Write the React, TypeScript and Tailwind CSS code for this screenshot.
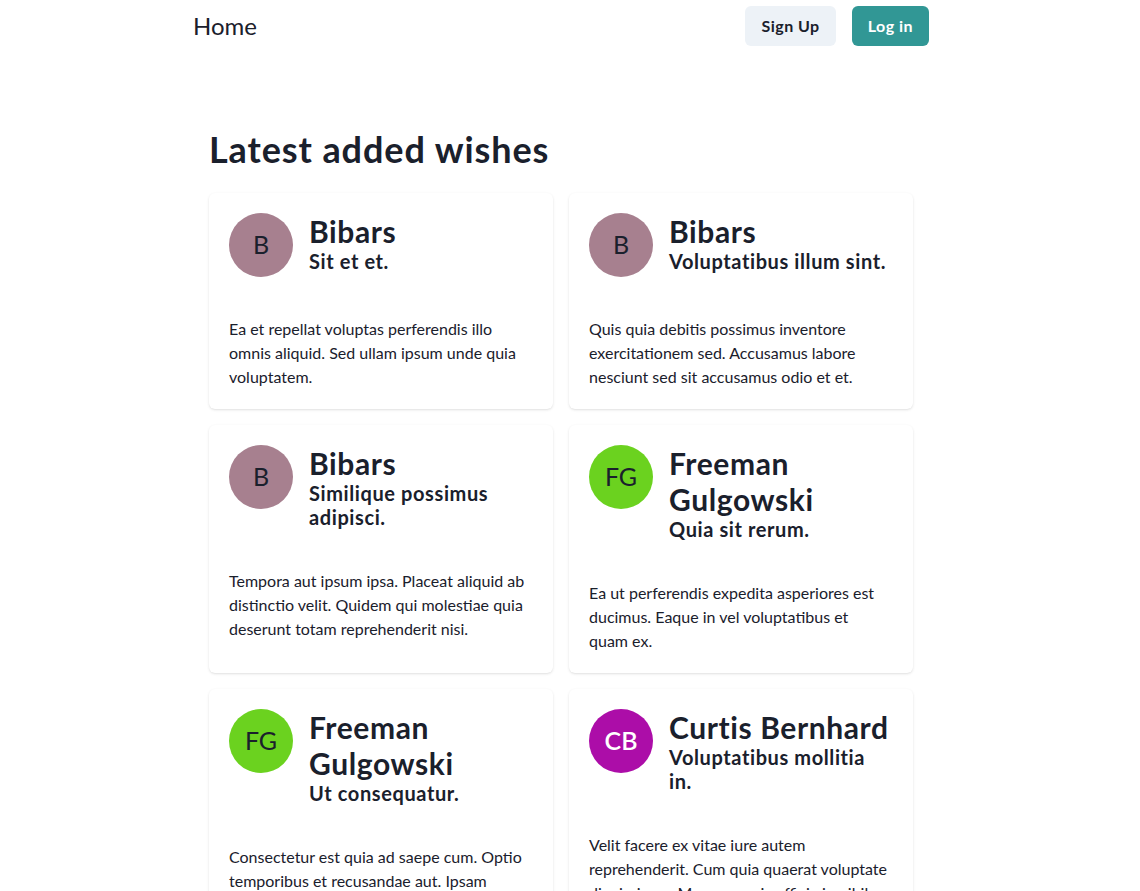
import React from "react";

type Wish = {
  name: string;
  initials: string;
  color: string;
  light: boolean;
  title: string;
  body: string;
};

const wishes: Wish[] = [
  {
    name: "Bibars",
    initials: "B",
    color: "bg-[#a7808f]",
    light: false,
    title: "Sit et et.",
    body: "Ea et repellat voluptas perferendis illo omnis aliquid. Sed ullam ipsum unde quia voluptatem.",
  },
  {
    name: "Bibars",
    initials: "B",
    color: "bg-[#a7808f]",
    light: false,
    title: "Voluptatibus illum sint.",
    body: "Quis quia debitis possimus inventore exercitationem sed. Accusamus labore nesciunt sed sit accusamus odio et et.",
  },
  {
    name: "Bibars",
    initials: "B",
    color: "bg-[#a7808f]",
    light: false,
    title: "Similique possimus adipisci.",
    body: "Tempora aut ipsum ipsa. Placeat aliquid ab distinctio velit. Quidem qui molestiae quia deserunt totam reprehenderit nisi.",
  },
  {
    name: "Freeman Gulgowski",
    initials: "FG",
    color: "bg-[#6bd21f]",
    light: false,
    title: "Quia sit rerum.",
    body: "Ea ut perferendis expedita asperiores est ducimus. Eaque in vel voluptatibus et quam ex.",
  },
  {
    name: "Freeman Gulgowski",
    initials: "FG",
    color: "bg-[#6bd21f]",
    light: false,
    title: "Ut consequatur.",
    body: "Consectetur est quia ad saepe cum. Optio temporibus et recusandae aut. Ipsam laboriosam quis et dolorem.",
  },
  {
    name: "Curtis Bernhard",
    initials: "CB",
    color: "bg-[#ac0da8]",
    light: true,
    title: "Voluptatibus mollitia in.",
    body: "Velit facere ex vitae iure autem reprehenderit. Cum quia quaerat voluptate dignissimos. Magnam quis officia in nihil.",
  },
];

function Card({ w }: { w: Wish }) {
  return (
    <div className="bg-white rounded-md shadow-sm flex flex-col">
      <div className="p-5 flex gap-4 items-start">
        <div
          className={`${w.color} w-16 h-16 rounded-full flex items-center justify-center shrink-0 text-[25px] ${
            w.light ? "text-white font-semibold" : "text-[#1a202c]"
          }`}
        >
          {w.initials}
        </div>
        <div className="flex flex-col min-w-0 flex-1">
          <h3 className="text-[30px] leading-[36px] font-bold tracking-[0.02em]">{w.name}</h3>
          <p className="text-xl leading-6 font-bold tracking-[0.03em] pr-1">{w.title}</p>
        </div>
      </div>
      <div className="pt-5 pb-5 pl-5 pr-6">
        <p className="text-base leading-6">{w.body}</p>
      </div>
    </div>
  );
}

export default function App() {
  return (
    <div
      className="min-h-screen bg-white text-[#1a202c]"
      style={{ fontFamily: '"Segoe UI", Lato, "Noto Sans", sans-serif' }}
    >
      <div className="ml-[177px] w-[768px] px-4">
        <nav className="flex items-center justify-between pt-[6px]">
          <span className="text-2xl leading-8 font-normal">Home</span>
          <div className="flex gap-4">
            <button className="h-10 px-4 rounded-md bg-[#edf2f7] font-bold text-base tracking-[0.03em] text-[#1a202c]">
              Sign Up
            </button>
            <button className="h-10 px-4 rounded-md bg-[#319795] font-bold text-base tracking-[0.03em] text-white">
              Log in
            </button>
          </div>
        </nav>
        <main className="px-4 pt-[82px]">
          <h2 className="text-[36px] leading-[1.2] font-bold tracking-[0.025em] mb-[22px]">Latest added wishes</h2>
          <div className="grid grid-cols-2 gap-4 pb-10">
            {wishes.map((w, i) => (
              <Card key={i} w={w} />
            ))}
          </div>
        </main>
      </div>
    </div>
  );
}
